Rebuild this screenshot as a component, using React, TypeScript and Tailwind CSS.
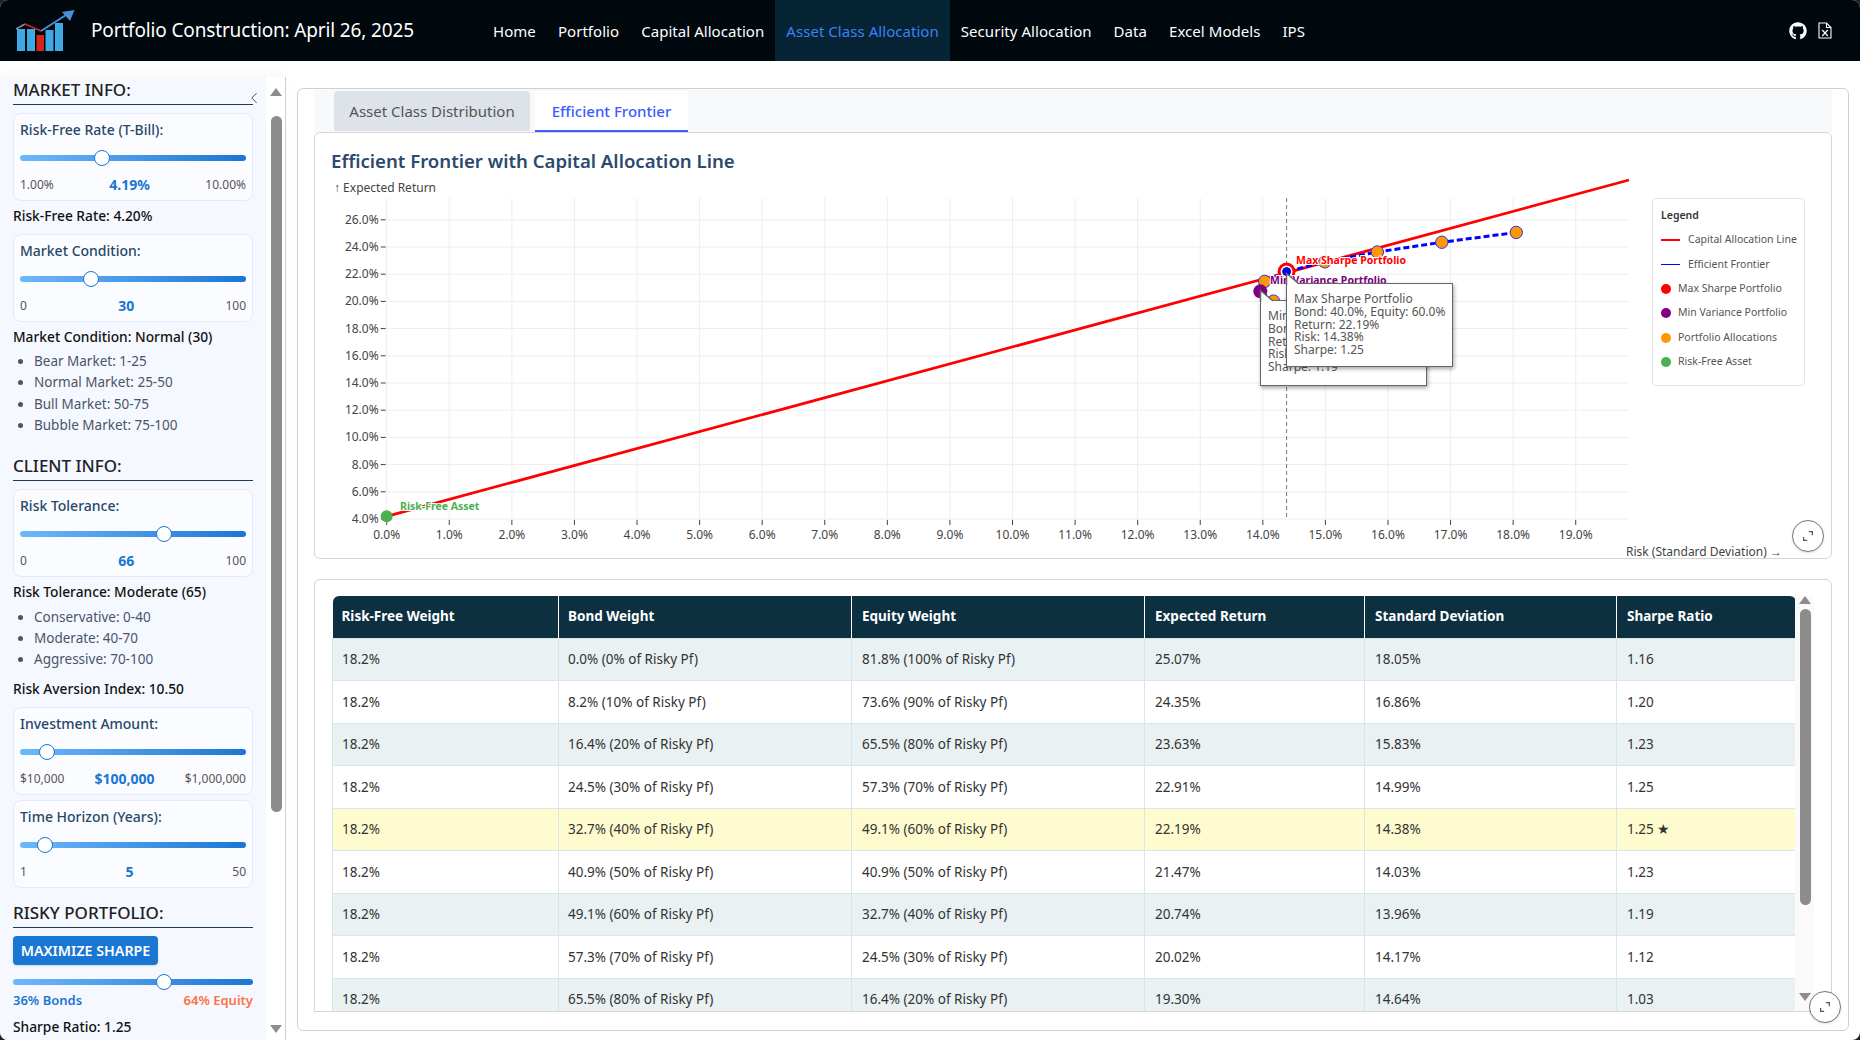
import React from "react";
import { FaGithub } from "react-icons/fa";
import { ChevronLeft } from "lucide-react";

const X = (s: number) => 55.7 + 62.58 * s;
const Y = (r: number) => 344 - 13.6 * (r - 4);

const navItems = ["Home", "Portfolio", "Capital Allocation", "Asset Class Allocation", "Security Allocation", "Data", "Excel Models", "IPS"];

const frontier: [number, number][] = [
  [18.05, 25.07],
  [16.86, 24.35],
  [15.83, 23.63],
  [14.99, 22.91],
  [14.38, 22.19],
  [14.03, 21.47],
  [13.96, 20.74],
  [14.17, 20.02],
];

const rows = [
  ["18.2%", "0.0% (0% of Risky Pf)", "81.8% (100% of Risky Pf)", "25.07%", "18.05%", "1.16"],
  ["18.2%", "8.2% (10% of Risky Pf)", "73.6% (90% of Risky Pf)", "24.35%", "16.86%", "1.20"],
  ["18.2%", "16.4% (20% of Risky Pf)", "65.5% (80% of Risky Pf)", "23.63%", "15.83%", "1.23"],
  ["18.2%", "24.5% (30% of Risky Pf)", "57.3% (70% of Risky Pf)", "22.91%", "14.99%", "1.25"],
  ["18.2%", "32.7% (40% of Risky Pf)", "49.1% (60% of Risky Pf)", "22.19%", "14.38%", "1.25 ★"],
  ["18.2%", "40.9% (50% of Risky Pf)", "40.9% (50% of Risky Pf)", "21.47%", "14.03%", "1.23"],
  ["18.2%", "49.1% (60% of Risky Pf)", "32.7% (40% of Risky Pf)", "20.74%", "13.96%", "1.19"],
  ["18.2%", "57.3% (70% of Risky Pf)", "24.5% (30% of Risky Pf)", "20.02%", "14.17%", "1.12"],
  ["18.2%", "65.5% (80% of Risky Pf)", "16.4% (20% of Risky Pf)", "19.30%", "14.64%", "1.03"],
];

const headers = ["Risk-Free Weight", "Bond Weight", "Equity Weight", "Expected Return", "Standard Deviation", "Sharpe Ratio"];
const colWidths = ["w-[226px]", "w-[293px]", "w-[293px]", "w-[220px]", "w-[252px]", "w-[179px]"];

function Logo() {
  return (
    <svg width="60" height="44" viewBox="15 9 60 44" className="shrink-0">
      <rect x="17" y="29" width="8" height="22" fill="#3fa9e6" />
      <rect x="27" y="29" width="8" height="22" fill="#3fa9e6" />
      <rect x="36.5" y="35" width="7.5" height="16" fill="#d8231a" />
      <rect x="45.5" y="30" width="8" height="21" fill="#3fa9e6" />
      <rect x="55" y="23" width="8" height="28" fill="#3fa9e6" />
      <path d="M16 29 L25 24" stroke="#8a8a8a" strokeWidth="1.6" fill="none" />
      <path d="M25 24 L41 31" stroke="#c9272a" strokeWidth="1.8" fill="none" />
      <path d="M41 31 L66 15" stroke="#4a90d9" strokeWidth="2" fill="none" />
      <path d="M62 12 L74.5 10 L70 21 Z" fill="#4a90d9" />
    </svg>
  );
}

function ExcelFile() {
  return (
    <svg width="14" height="17" viewBox="0 0 14 17" fill="none" stroke="#fff" strokeWidth="1.1">
      <path d="M1 1 H8.5 L13 5.5 V16 H1 Z" />
      <path d="M8.5 1 V5.5 H13" />
      <path d="M4.2 8 L9.8 14 M9.8 8 L4.2 14" strokeWidth="1.2" />
    </svg>
  );
}

function Header() {
  return (
    <header className="flex h-[61px] shrink-0 items-center bg-[#00070d] text-white">
      <div className="ml-[15px] w-[76px]">
        <Logo />
      </div>
      <div className="w-[391px] whitespace-nowrap text-[19px] tracking-[-0.15px]">Portfolio Construction: April 26, 2025</div>
      <nav className="flex h-full">
        {navItems.map((n) => (
          <div
            key={n}
            className={
              n === "Asset Class Allocation"
                ? "flex h-full items-center whitespace-nowrap bg-[#062433] px-[11px] pt-[1px] text-[15px] tracking-[0.05px] text-[#3b82f6]"
                : "flex h-full items-center whitespace-nowrap px-[11px] pt-[1px] text-[15px] tracking-[0.05px] text-white"
            }
          >
            {n}
          </div>
        ))}
      </nav>
      <div className="ml-auto mr-[28px] flex items-center gap-[11px]">
        <FaGithub className="h-[18px] w-[18px]" />
        <ExcelFile />
      </div>
    </header>
  );
}

function Track({ thumb }: { thumb: number }) {
  return (
    <div className="relative flex h-[16px] items-center">
      <div className="h-[6px] w-full rounded-full bg-gradient-to-r from-[#6db8fb] to-[#1976d2]" />
      <div
        className="absolute top-0 h-[16px] w-[16px] rounded-full border-[1.5px] border-[#1976d2] bg-white"
        style={{ left: thumb - 8 }}
      />
    </div>
  );
}

function SliderCard({ label, min, max, value, thumb, mt }: { label: string; min: string; max: string; value: string; thumb: number; mt: string }) {
  return (
    <div className={`${mt} h-[88px] w-[240px] rounded-[8px] border border-[#e3eafc] bg-[#fbfcff] px-[6px] pt-[6px]`}>
      <div className="text-[14px] font-medium leading-[20px] text-[#274768]">{label}</div>
      <div className="mt-[10px]">
        <Track thumb={thumb} />
      </div>
      <div className="mt-[9px] flex items-center justify-between leading-[20px]">
        <span className="text-[12px] text-[#555]">{min}</span>
        <span className="text-[14px] font-bold text-[#1976d2]">{value}</span>
        <span className="text-[12px] text-[#555]">{max}</span>
      </div>
    </div>
  );
}

function Heading({ children, mt }: { children: React.ReactNode; mt: string }) {
  return (
    <div className={`${mt} h-[28px] border-b border-[#1f3a57] text-[17px] font-medium leading-[26px] text-[#222]`}>
      {children}
    </div>
  );
}

function Info({ children, mt }: { children: React.ReactNode; mt: string }) {
  return <div className={`${mt} text-[13.75px] font-medium leading-[20px] text-[#111]`}>{children}</div>;
}

function Bullets({ items, mt }: { items: string[]; mt: string }) {
  return (
    <ul className={`${mt} list-disc pl-[21px] text-[13.5px] leading-[21.4px] text-[#4a5568] marker:text-[#4a5568]`}>
      {items.map((i) => (
        <li key={i}>{i}</li>
      ))}
    </ul>
  );
}

function Sidebar() {
  return (
    <aside className="mt-[16px] flex h-[963px] w-[286px] shrink-0 border-r border-[#cfcfcf] shadow-[0_-4px_8px_rgba(0,0,0,0.03)]">
      <div className="relative h-full w-[266px] overflow-hidden bg-[#f5f8ff] pl-[13px] pr-[13px]">
        <Heading mt="mt-0">MARKET INFO:</Heading>
        <ChevronLeft className="absolute left-[245px] top-[12px] h-[18px] w-[18px] text-[#333]" strokeWidth={1.2} />
        <SliderCard mt="mt-[8px]" label="Risk-Free Rate (T-Bill):" min="1.00%" max="10.00%" value="4.19%" thumb={82} />
        <Info mt="mt-[5px]">Risk-Free Rate: 4.20%</Info>
        <SliderCard mt="mt-[8px]" label="Market Condition:" min="0" max="100" value="30" thumb={71} />
        <Info mt="mt-[5px]">Market Condition: Normal (30)</Info>
        <Bullets mt="mt-[4px]" items={["Bear Market: 1-25", "Normal Market: 25-50", "Bull Market: 50-75", "Bubble Market: 75-100"]} />
        <Heading mt="mt-[16px]">CLIENT INFO:</Heading>
        <SliderCard mt="mt-[8px]" label="Risk Tolerance:" min="0" max="100" value="66" thumb={144} />
        <Info mt="mt-[5px]">Risk Tolerance: Moderate (65)</Info>
        <Bullets mt="mt-[5px]" items={["Conservative: 0-40", "Moderate: 40-70", "Aggressive: 70-100"]} />
        <Info mt="mt-[8px]">Risk Aversion Index: 10.50</Info>
        <SliderCard mt="mt-[8px]" label="Investment Amount:" min="$10,000" max="$1,000,000" value="$100,000" thumb={27} />
        <SliderCard mt="mt-[5px]" label="Time Horizon (Years):" min="1" max="50" value="5" thumb={25} />
        <Heading mt="mt-[12px]">RISKY PORTFOLIO:</Heading>
        <div className="mt-[8px] flex h-[29px] w-[145px] items-center justify-center rounded-[4px] bg-[#1976d2] text-[14.25px] font-semibold text-white shadow-sm">
          MAXIMIZE SHARPE
        </div>
        <div className="mt-[9px]">
          <Track thumb={151} />
        </div>
        <div className="flex justify-between text-[13px] font-semibold leading-[20px]">
          <span className="text-[#1976d2]">36% Bonds</span>
          <span className="text-[#ff7043]">64% Equity</span>
        </div>
        <Info mt="mt-[7px]">Sharpe Ratio: 1.25</Info>
      </div>
      <div className="flex h-full w-[19px] flex-col items-center bg-white pl-[1px]">
        <div className="mt-[11px] h-0 w-0 border-x-[6px] border-b-[8px] border-x-transparent border-b-[#8c8c8c]" />
        <div className="mt-[20px] h-[696px] w-[11px] rounded-full bg-[#8c8c8c]" />
        <div className="mb-[7px] mt-auto h-0 w-0 border-x-[6px] border-t-[8px] border-x-transparent border-t-[#8c8c8c]" />
      </div>
    </aside>
  );
}

function ChartSvg() {
  const vs = Array.from({ length: 20 }, (_, i) => i);
  const hs = [4, 6, 8, 10, 12, 14, 16, 18, 20, 22, 24, 26];
  const line = frontier.map(([s, r]) => `${X(s)},${Y(r)}`).join(" ");
  const oranges = frontier.filter((_, i) => i !== 4 && i !== 6);
  return (
    <svg width="1309" height="383" viewBox="0 0 1309 383" className="shrink-0 overflow-visible">
      {vs.map((v) => (
        <line key={v} x1={X(v)} x2={X(v)} y1={23} y2={344} stroke="#eeeeee" />
      ))}
      {hs.map((h) => (
        <line key={h} x1={X(0)} x2={1298} y1={Y(h)} y2={Y(h)} stroke="#eeeeee" />
      ))}
      {hs.map((h) => (
        <g key={h}>
          <line x1={X(0) - 6} x2={X(0) - 1} y1={Y(h)} y2={Y(h)} stroke="#444" />
          <text x={X(0) - 8} y={Y(h) + 4} textAnchor="end" fontSize="12" fill="#444">
            {h.toFixed(1)}%
          </text>
        </g>
      ))}
      {vs.map((v) => (
        <g key={v}>
          <line x1={X(v)} x2={X(v)} y1={345} y2={350} stroke="#444" />
          <text x={X(v)} y={364} textAnchor="middle" fontSize="12" fill="#444">
            {v.toFixed(1)}%
          </text>
        </g>
      ))}
      <text x={3} y={17} fontSize="12" fill="#444">
        <tspan fontFamily="Liberation Sans">↑</tspan> Expected Return
      </text>
      <text x={1295} y={381} fontSize="12" fill="#444">
        Risk (Standard Deviation) <tspan fontFamily="Liberation Sans">→</tspan>
      </text>
      <line x1={X(14.38)} x2={X(14.38)} y1={23} y2={344} stroke="#777" strokeDasharray="4 3" />
      <line x1={X(0)} y1={Y(4.2)} x2={1298} y2={5} stroke="#ff0000" strokeWidth="2.8" />
      <polyline points={line} fill="none" stroke="#0000ff" strokeWidth="3" strokeDasharray="6 3" />
      {oranges.map(([s, r]) => (
        <circle key={s} cx={X(s)} cy={Y(r)} r="6.2" fill="#ff9800" stroke="#2a33ee" strokeWidth="1" />
      ))}
      <circle cx={X(14.38)} cy={Y(22.19)} r="7.5" fill="#fff" stroke="#ff0000" strokeWidth="3" />
      <circle cx={X(14.38)} cy={Y(22.19)} r="4" fill="#0000ff" stroke="#001a8c" />
      <circle cx={X(13.96)} cy={Y(20.74)} r="7" fill="#800080" />
      <circle cx={X(0)} cy={Y(4.2)} r="6" fill="#4caf50" />
      <g fontSize="10.5" fontWeight="700" stroke="#fff" strokeWidth="2" paintOrder="stroke">
        <text x={1296 - 331} y={89} fill="#ff0000">Max Sharpe Portfolio</text>
        <text x={1270 - 331} y={109} fill="#800080">Min Variance Portfolio</text>
        <text x={400 - 331} y={335} fill="#4caf50">Risk-Free Asset</text>
      </g>
    </svg>
  );
}

function Tooltip({ left, top, h, lines }: { left: string; top: string; h: string; lines: string[] }) {
  return (
    <div className={`absolute ${left} ${top} ${h} w-[167px] border-[1.5px] border-[#666] bg-white pl-[7px] pt-[9px] text-[12px] leading-[12.8px] text-[#555] shadow-[1px_2px_4px_rgba(0,0,0,0.35)]`}>
      <svg width="15" height="12" viewBox="0 0 15 12" className="absolute left-[-1.5px] top-[-11px] overflow-visible">
        <path d="M0.5 12 L0.5 0.5 L13 11" fill="#fff" stroke="#666" strokeWidth="1.5" />
        <path d="M2 12 H12.5 L2 3 Z" fill="#fff" />
      </svg>
      {lines.map((l) => (
        <div key={l} className="whitespace-nowrap">
          {l}
        </div>
      ))}
    </div>
  );
}

function Legend() {
  const lineItems = [
    { label: "Capital Allocation Line", cls: "h-[2px] bg-[#ff0000]" },
    { label: "Efficient Frontier", cls: "h-[1px] bg-[#0000ff]" },
  ];
  const dots = [
    { label: "Max Sharpe Portfolio", cls: "bg-[#ff0000]" },
    { label: "Min Variance Portfolio", cls: "bg-[#800080]" },
    { label: "Portfolio Allocations", cls: "bg-[#ff9800]" },
    { label: "Risk-Free Asset", cls: "bg-[#4caf50]" },
  ];
  return (
    <div className="ml-[12px] mt-[23px] h-[188px] w-[153px] shrink-0 rounded-[4px] border border-[#e2e2e2] bg-white pl-[8px] pt-[8px] text-[10.5px] text-[#555]">
      <div className="mb-[5px] text-[10.5px] font-semibold leading-[16px] text-[#333]">Legend</div>
      {lineItems.map((i) => (
        <div key={i.label} className="flex h-[24.4px] items-center">
          <div className={`${i.cls} w-[19px]`} />
          <span className="ml-[8px] whitespace-nowrap">{i.label}</span>
        </div>
      ))}
      {dots.map((i) => (
        <div key={i.label} className="flex h-[24.4px] items-center">
          <div className={`${i.cls} h-[10px] w-[10px] rounded-full`} />
          <span className="ml-[7px] whitespace-nowrap">{i.label}</span>
        </div>
      ))}
    </div>
  );
}

function ExpandButton({ pos }: { pos: string }) {
  return (
    <div className={`absolute ${pos} z-10 flex h-[32px] w-[32px] items-center justify-center rounded-full border border-[#777] bg-white shadow-sm`}>
      <svg width="14" height="14" viewBox="0 0 16 16" fill="none" stroke="#555" strokeWidth="1.4">
        <path d="M9 3 H13 V7" />
        <path d="M3 9 V13 H7" />
      </svg>
    </div>
  );
}

function ChartCard() {
  return (
    <div className="relative h-[427px] rounded-[6px] border border-[#d6d6d6] bg-white pl-[16px] pt-[14px]">
      <div className="mb-[1px] text-[18.6px] font-semibold leading-[27px] text-[#2c4a6e]">Efficient Frontier with Capital Allocation Line</div>
      <div className="relative flex">
        <ChartSvg />
        <Legend />
        <Tooltip
          left="left-[929px]"
          top="top-[125px]"
          h="h-[86px]"
          lines={["Min Variance Portfolio", "Bond: 60.0%, Equity: 40.0%", "Return: 20.74%", "Risk: 13.96%", "Sharpe: 1.19"]}
        />
        <Tooltip
          left="left-[955px]"
          top="top-[108px]"
          h="h-[84px]"
          lines={["Max Sharpe Portfolio", "Bond: 40.0%, Equity: 60.0%", "Return: 22.19%", "Risk: 14.38%", "Sharpe: 1.25"]}
        />
      </div>
      <ExpandButton pos="right-[7px] bottom-[6px]" />
    </div>
  );
}

function TableCard() {
  return (
    <div className="mt-[20px] flex h-[433px] rounded-t-[6px] border border-[#d6d6d6] pl-[17px] pt-[16px]">
      <div className="h-[415px] w-[1463px] shrink-0 overflow-hidden">
        <table className="w-[1463px] table-fixed border-collapse text-left">
          <thead>
            <tr className="h-[42px] bg-[#0d3041] text-[13.5px] font-bold text-white">
              {headers.map((h, i) => (
                <th
                  key={h}
                  className={`${colWidths[i]} ${i === 0 ? "rounded-tl-[6px]" : ""} ${i === 5 ? "rounded-tr-[6px]" : "border-r border-white"} ${i < 2 ? "pl-[9px]" : "pl-[10px]"} pb-[1px] pr-[10px] font-bold`}
                >
                  {h}
                </th>
              ))}
            </tr>
          </thead>
          <tbody>
            {rows.map((r, ri) => (
              <tr key={ri} className={ri === 4 ? "h-[42.5px] bg-[#fefccf]" : ri % 2 === 0 ? "h-[42.5px] bg-[#e9f1f3]" : "h-[42.5px] bg-white"}>
                {r.map((c, ci) => (
                  <td key={ci} className={`border border-[#d9e5e8] ${ci < 2 ? "pl-[9px]" : "pl-[10px]"} pr-[10px] text-[13.5px] text-[#333]`}>
                    {c}
                  </td>
                ))}
              </tr>
            ))}
          </tbody>
        </table>
      </div>
      <div className="flex h-[415px] w-[19px] flex-col items-center bg-[#fafafa] pl-[1px]">
        <div className="h-0 w-0 border-x-[6px] border-b-[8px] border-x-transparent border-b-[#8c8c8c]" />
        <div className="mt-[5px] h-[296px] w-[11px] rounded-full bg-[#8c8c8c]" />
        <div className="mb-[10px] mt-auto h-0 w-0 border-x-[6px] border-t-[8px] border-x-transparent border-t-[#8c8c8c]" />
      </div>
    </div>
  );
}

function Main() {
  return (
    <main className="relative ml-[11px] mt-[27px] h-[943px] w-[1552px] shrink-0 rounded-[6px] border border-[#d0d0d0] bg-white px-[16px]">
      <div className="flex h-[43px] items-start bg-[#f8f9fb] pt-[2px]">
        <div className="ml-[20px] flex h-[40px] w-[196px] items-center justify-center rounded-t-[4px] bg-[#dee2e9] text-[15px] text-[#555]">
          Asset Class Distribution
        </div>
        <div className="ml-[5px] flex h-[41px] w-[153px] items-center justify-center border-b-2 border-[#3b5bfd] bg-white pt-[1px] text-[15px] font-medium text-[#3b5bfd]">
          Efficient Frontier
        </div>
      </div>
      <ChartCard />
      <TableCard />
      <ExpandButton pos="right-[7px] bottom-[7px]" />
    </main>
  );
}

export default function App() {
  return (
    <div className="h-[1040px] w-[1860px] overflow-hidden bg-[#222]">
      <div className="flex h-[1040px] w-[1860px] flex-col overflow-hidden rounded-[8px] bg-white font-['Noto_Sans',sans-serif]">
        <Header />
        <div className="flex items-start">
          <Sidebar />
          <Main />
        </div>
      </div>
    </div>
  );
}
